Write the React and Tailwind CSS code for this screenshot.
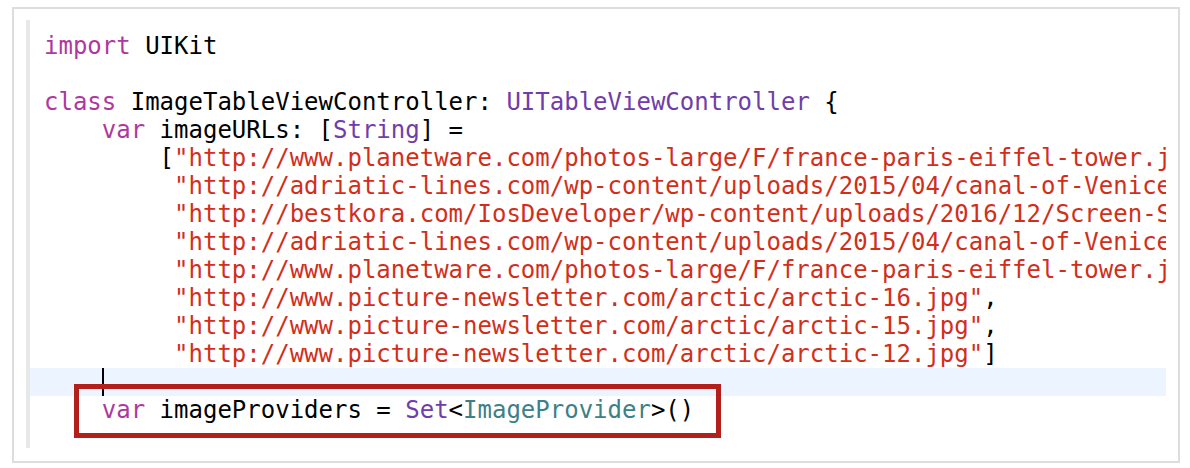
import React from 'react';

const K = ({ children }) => <span className="text-[#b0379f]">{children}</span>;
const T = ({ children }) => <span className="text-[#703daa]">{children}</span>;
const P = ({ children }) => <span className="text-[#3e8087]">{children}</span>;
const S = ({ children }) => <span className="text-[#d12f1b]">{children}</span>;

const urls = [
  'http://www.planetware.com/photos-large/F/france-paris-eiffel-tower.jpg',
  'http://adriatic-lines.com/wp-content/uploads/2015/04/canal-of-Venice.jpg',
  'http://bestkora.com/IosDeveloper/wp-content/uploads/2016/12/Screen-Shot-2016-12-01.png',
  'http://adriatic-lines.com/wp-content/uploads/2015/04/canal-of-Venice.jpg',
  'http://www.planetware.com/photos-large/F/france-paris-eiffel-tower.jpg',
  'http://www.picture-newsletter.com/arctic/arctic-16.jpg',
  'http://www.picture-newsletter.com/arctic/arctic-15.jpg',
  'http://www.picture-newsletter.com/arctic/arctic-12.jpg',
];

const Line = ({ children, className = '' }) => (
  <div className={`h-[28px] pl-[14px] whitespace-pre ${className}`}>{children}</div>
);

export default function App() {
  return (
    <div className="bg-white w-[1190px] h-[468px] pt-[7px] pl-[12px]">
      <div className="w-[1168px] h-[456px] border-2 border-[#dddddd] pt-[11px] pl-[12px] flex">
        <div className="w-[4px] h-[428px] bg-[#e8e8e8]" />
        <div
          className="w-[1136px] h-[428px] overflow-hidden pt-[12px] text-[24px] leading-[28px] text-black"
          style={{ fontFamily: '"DejaVu Sans Mono", "Liberation Mono", monospace' }}
        >
          <Line>
            <K>import</K> UIKit
          </Line>
          <Line> </Line>
          <Line>
            <K>class</K> ImageTableViewController: <T>UITableViewController</T> {'{'}
          </Line>
          <Line>
            {'    '}
            <K>var</K> imageURLs: [<T>String</T>] =
          </Line>
          {urls.map((u, i) => (
            <Line key={i}>
              {i === 0 ? '        [' : '         '}
              <S>"{u}"</S>
              {i === urls.length - 1 ? ']' : ','}
            </Line>
          ))}
          <Line className="bg-[#ecf5ff]">
            {'    '}
            <span className="inline-block w-[2px] h-[28px] bg-black align-top" />
          </Line>
          <Line className="relative">
            {'    '}
            <K>var</K> imageProviders = <T>Set</T>&lt;<P>ImageProvider</P>&gt;()
            <div className="absolute left-[44px] top-[-12px] w-[647px] h-[54px] border-[5px] border-[#b3201b]" />
          </Line>
        </div>
      </div>
    </div>
  );
}
